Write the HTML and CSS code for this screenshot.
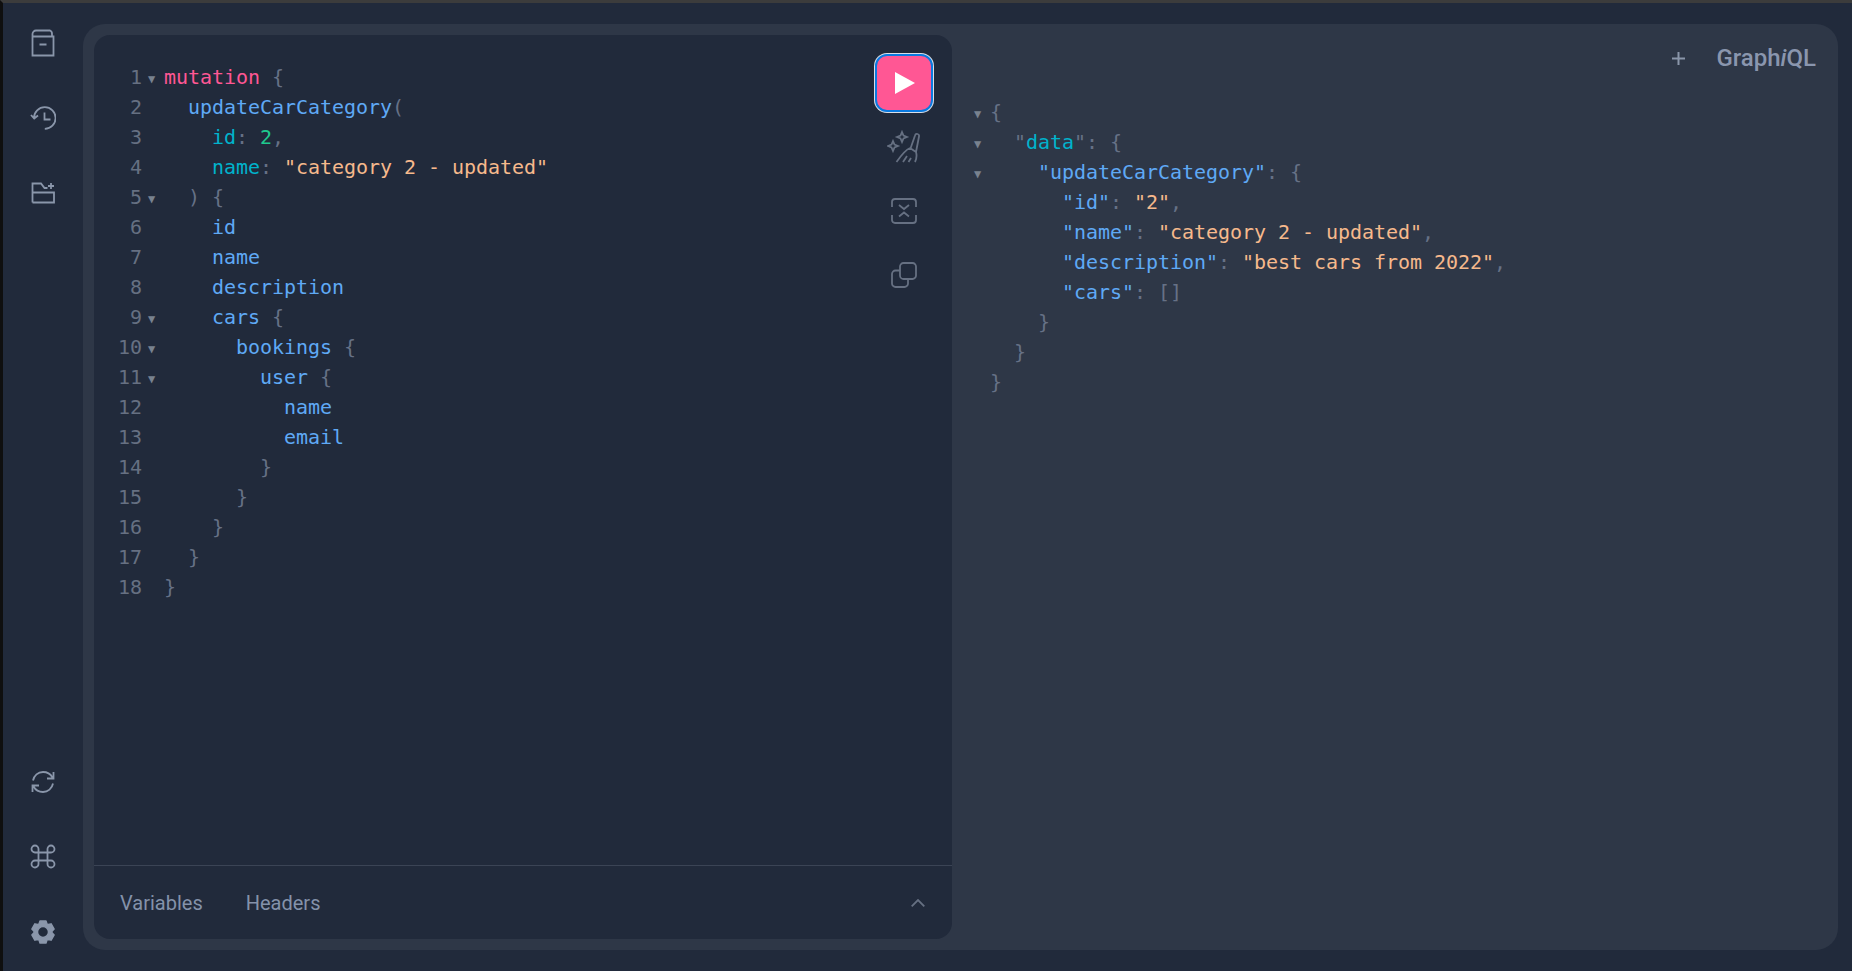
FILE: index.html
```html
<!DOCTYPE html>
<html lang="en">
<head>
<meta charset="utf-8">
<title>GraphiQL</title>
<link rel="stylesheet" href="styles.css">
</head>
<body>
<div class="app">
  <nav class="sidebar">
    <div class="side-group">
      <button class="side-btn"><svg class="icon" width="24" height="28" viewBox="0 0 24 28"><path d="M1.500 8.500V5A3.500 3.500 0 0 1 5 1.500h14A3.500 3.500 0 0 1 21 5v2M1.500 7.500h21v19h-21zM8.500 15.500h7"/></svg></button>
      <button class="side-btn"><svg class="icon" width="26" height="24" viewBox="0 0 26 24"><path d="M4 12a10.800 10.800 0 1 1 10.800 10.800M1 9l3.200 3.500L8 9.500M14.500 6.500v7h6"/></svg></button>
      <button class="side-btn"><svg class="icon" width="24" height="22" viewBox="0 0 24 22"><path d="M1.500 20.500V1.500h8.500l3.500 4.500h3M1.500 10.500h21.500v10H1.500M20 1v6M17 4h6"/></svg></button>
    </div>
    <div class="side-group">
      <button class="side-btn"><svg class="icon" width="26" height="24" viewBox="0 0 26 24"><path d="M3 10.500C4 5.500 8 2 13 2c4 0 7.500 2 9.500 5.500M23 13.500C22 18.500 18 22 13 22c-4 0-7.500-2-9.500-5.500M23.500 2v6.500H17M2.500 22v-6.500H9"/></svg></button>
      <button class="side-btn"><svg class="icon" width="26" height="25" viewBox="0 0 26 25"><path d="M8.500 8.500V5a3.500 3.500 0 1 0-3.500 3.500h16A3.500 3.500 0 1 0 17.500 5v15a3.500 3.500 0 1 0 3.500-3.500H5A3.500 3.500 0 1 0 8.500 20V8.500"/></svg></button>
      <button class="side-btn"><svg class="gear" width="26" height="26" viewBox="0 0 26 26"><path fill-rule="evenodd" d="M10.020 1.890H15.980L16.950 4.910 18.030 5.540 21.130 4.870 24.110 10.020 21.980 12.370V13.630L24.110 15.980 21.130 21.130 18.030 20.460 16.950 21.090 15.980 24.110H10.020L9.050 21.090 7.970 20.460 4.870 21.130 1.890 15.980 4.020 13.630V12.370L1.890 10.020 4.870 4.870 7.970 5.540 9.050 4.910ZM13 7.500a5.500 5.500 0 1 0 0 11 5.500 5.500 0 0 0 0-11z"/></svg></button>
    </div>
  </nav>
  <main class="session">
    <section class="editors">
      <div class="query">
        <div class="code query-code">
          <div class="line"><span class="num">1</span><span class="fold">▼</span><span class="kw">mutation</span> <span class="pn">{</span></div>
          <div class="line"><span class="num">2</span><span class="fold"></span>  <span class="fn">updateCarCategory</span><span class="pn">(</span></div>
          <div class="line"><span class="num">3</span><span class="fold"></span>    <span class="arg">id</span><span class="pn">:</span> <span class="int">2</span><span class="pn">,</span></div>
          <div class="line"><span class="num">4</span><span class="fold"></span>    <span class="arg">name</span><span class="pn">:</span> <span class="str">"category 2 - updated"</span></div>
          <div class="line"><span class="num">5</span><span class="fold">▼</span>  <span class="pn">) {</span></div>
          <div class="line"><span class="num">6</span><span class="fold"></span>    <span class="fn">id</span></div>
          <div class="line"><span class="num">7</span><span class="fold"></span>    <span class="fn">name</span></div>
          <div class="line"><span class="num">8</span><span class="fold"></span>    <span class="fn">description</span></div>
          <div class="line"><span class="num">9</span><span class="fold">▼</span>    <span class="fn">cars</span> <span class="pn">{</span></div>
          <div class="line"><span class="num">10</span><span class="fold">▼</span>      <span class="fn">bookings</span> <span class="pn">{</span></div>
          <div class="line"><span class="num">11</span><span class="fold">▼</span>        <span class="fn">user</span> <span class="pn">{</span></div>
          <div class="line"><span class="num">12</span><span class="fold"></span>          <span class="fn">name</span></div>
          <div class="line"><span class="num">13</span><span class="fold"></span>          <span class="fn">email</span></div>
          <div class="line"><span class="num">14</span><span class="fold"></span>        <span class="pn">}</span></div>
          <div class="line"><span class="num">15</span><span class="fold"></span>      <span class="pn">}</span></div>
          <div class="line"><span class="num">16</span><span class="fold"></span>    <span class="pn">}</span></div>
          <div class="line"><span class="num">17</span><span class="fold"></span>  <span class="pn">}</span></div>
          <div class="line"><span class="num">18</span><span class="fold"></span><span class="pn">}</span></div>
        </div>
        <div class="toolbar">
          <button class="run"><svg width="20" height="22" viewBox="0 0 20 22"><path class="play" d="M0 0l20 11L0 22z"/></svg></button>
          <button class="tool"><svg class="tool-icon" width="34" height="34" viewBox="0 0 34 34"><path d="M15 2l1.500 3.500L20 7l-3.500 1.500L15 12l-1.500-3.500L10 7l3.500-1.500zM6 11l1.500 3.500L11 16l-3.500 1.500L6 21l-1.500-3.500L1 16l3.500-1.500zM23.500 18.500L28 5.500a2 2 0 0 1 4 1L29 22M29 22c1 3.500.5 7-1 10M23 18l6 4M23 18c-5 2-10 9-13.500 14M16 32l4-6M21.500 32l2.500-4"/></svg></button>
          <button class="tool"><svg class="tool-icon" width="26" height="26" viewBox="0 0 26 26"><path d="M1 9V4a3 3 0 0 1 3-3h18a3 3 0 0 1 3 3v5M25 17v5a3 3 0 0 1-3 3H4a3 3 0 0 1-3-3v-5M8 7l5 4 5-4M8 18.500l5-4 5 4"/></svg></button>
          <button class="tool"><svg class="tool-icon" width="26" height="26" viewBox="0 0 26 26"><path d="M12.500 1h9a3.500 3.500 0 0 1 3.500 3.500v9a3.500 3.500 0 0 1-3.500 3.500h-9A3.500 3.500 0 0 1 9 13.500v-9A3.500 3.500 0 0 1 12.500 1zM9 8.500H4.500A3.500 3.500 0 0 0 1 12v9.500A3.500 3.500 0 0 0 4.500 25h9a3.500 3.500 0 0 0 3.500-3.500V17"/></svg></button>
        </div>
      </div>
      <div class="tabs">
        <button class="tab">Variables</button>
        <button class="tab">Headers</button>
        <svg class="chevron" width="14" height="8" viewBox="0 0 14 8"><path d="M.7 7.300L7 1l6.300 6.300"/></svg>
      </div>
    </section>
    <section class="result">
      <header class="result-head">
        <svg class="plus" width="13" height="13" viewBox="0 0 13 13"><path d="M6.500 0v13M0 6.500h13"/></svg>
        <div class="logo">Graph<em>i</em>QL</div>
      </header>
      <div class="code result-code">
        <div class="line"><span class="fold">▼</span><span class="pn">{</span></div>
        <div class="line"><span class="fold">▼</span>  <span class="pn">"</span><span class="arg">data</span><span class="pn">": {</span></div>
        <div class="line"><span class="fold">▼</span>    <span class="fn">"updateCarCategory"</span><span class="pn">: {</span></div>
        <div class="line"><span class="fold"></span>      <span class="fn">"id"</span><span class="pn">:</span> <span class="str">"2"</span><span class="pn">,</span></div>
        <div class="line"><span class="fold"></span>      <span class="fn">"name"</span><span class="pn">:</span> <span class="str">"category 2 - updated"</span><span class="pn">,</span></div>
        <div class="line"><span class="fold"></span>      <span class="fn">"description"</span><span class="pn">:</span> <span class="str">"best cars from 2022"</span><span class="pn">,</span></div>
        <div class="line"><span class="fold"></span>      <span class="fn">"cars"</span><span class="pn">: []</span></div>
        <div class="line"><span class="fold"></span>    <span class="pn">}</span></div>
        <div class="line"><span class="fold"></span>  <span class="pn">}</span></div>
        <div class="line"><span class="fold"></span><span class="pn">}</span></div>
      </div>
    </section>
  </main>
</div>
</body>
</html>
```

FILE: styles.css
```css
* { box-sizing: border-box; }
html, body { margin: 0; height: 100%; overflow: hidden; }
body {
  background: #212a3b;
  border-top: 3px solid #3c3c3c;
  border-left: 3px solid #0f0f0f;
  font-family: Roboto, sans-serif;
}
button { background: none; border: 0; padding: 0; margin: 0; font: inherit; color: inherit; }

.app { display: flex; height: 100%; }

.sidebar {
  width: 80px;
  flex: none;
  display: flex;
  flex-direction: column;
  justify-content: space-between;
  padding: 2px 0 2px;
}
.side-group { display: flex; flex-direction: column; }
.side-btn { height: 75px; display: flex; align-items: center; justify-content: center; }
.icon { fill: none; stroke: #8a96aa; stroke-width: 1.8; }
.gear { fill: #8a96aa; stroke: #8a96aa; stroke-width: 1.5; stroke-linejoin: round; }

.session {
  flex: 1;
  display: flex;
  margin: 21px 14px 21px 0;
  padding: 11px 0 11px 11px;
  background: #2e3747;
  border-radius: 22px;
}

.editors {
  width: 858px;
  flex: none;
  display: flex;
  flex-direction: column;
  background: #212a3b;
  border-radius: 16px;
}
.query { flex: 1; display: flex; min-height: 0; border-bottom: 1px solid #3b4455; }
.code {
  font-family: "DejaVu Sans Mono", "Liberation Mono", monospace;
  font-size: 20px;
  line-height: 30px;
  letter-spacing: -0.04px;
  color: #667186;
}
.query-code { flex: 1; padding: 27px 0 0 14px; }
.line { height: 30px; white-space: pre; }
.num { display: inline-block; width: 34px; text-align: right; color: #667082; }
.fold {
  display: inline-block;
  width: 22px;
  font-size: 12px;
  padding-left: 6px;
  vertical-align: 1px;
  color: #79828f;
  letter-spacing: 0;
}
.kw { color: #ff5794; }
.fn { color: #5fa9f5; }
.arg { color: #00b3cc; }
.int { color: #1fc98e; }
.str { color: #f6b98c; }
.pn { color: #667186; }

.toolbar {
  width: 96px;
  flex: none;
  display: flex;
  flex-direction: column;
  align-items: center;
  padding-top: 19px;
}
.run {
  width: 58px;
  height: 58px;
  flex: none;
  margin-bottom: 3px;
  display: flex;
  align-items: center;
  justify-content: center;
  padding-left: 1px;
  background: #ff5794;
  border-radius: 12px;
  border: 2px solid #0a7ae0;
  box-shadow: 0 0 0 1px #d8dee8;
}
.play { fill: #fff; }
.tool { width: 58px; height: 64px; flex: none; display: flex; align-items: center; justify-content: center; }
.tool-icon { fill: none; stroke: #667082; stroke-width: 1.8; }

.tabs { height: 73px; flex: none; display: flex; align-items: center; padding: 0 27px 0 26px; }
.tab { font-size: 20px; color: #8492aa; margin-right: 43px; }
.chevron { margin-left: auto; fill: none; stroke: #667082; stroke-width: 1.800; }

.result { flex: 1; min-width: 0; display: flex; flex-direction: column; }
.result-head {
  height: 62px;
  flex: none;
  display: flex;
  align-items: center;
  justify-content: flex-end;
  padding: 0 22px 16px 0;
}
.plus { fill: none; stroke: #8a96aa; stroke-width: 2; margin-right: 31px; }
.logo { font-size: 24px; font-weight: 500; color: #8a96ae; }
.logo em { font-style: italic; }
.result-code { padding-left: 16px; }
```
